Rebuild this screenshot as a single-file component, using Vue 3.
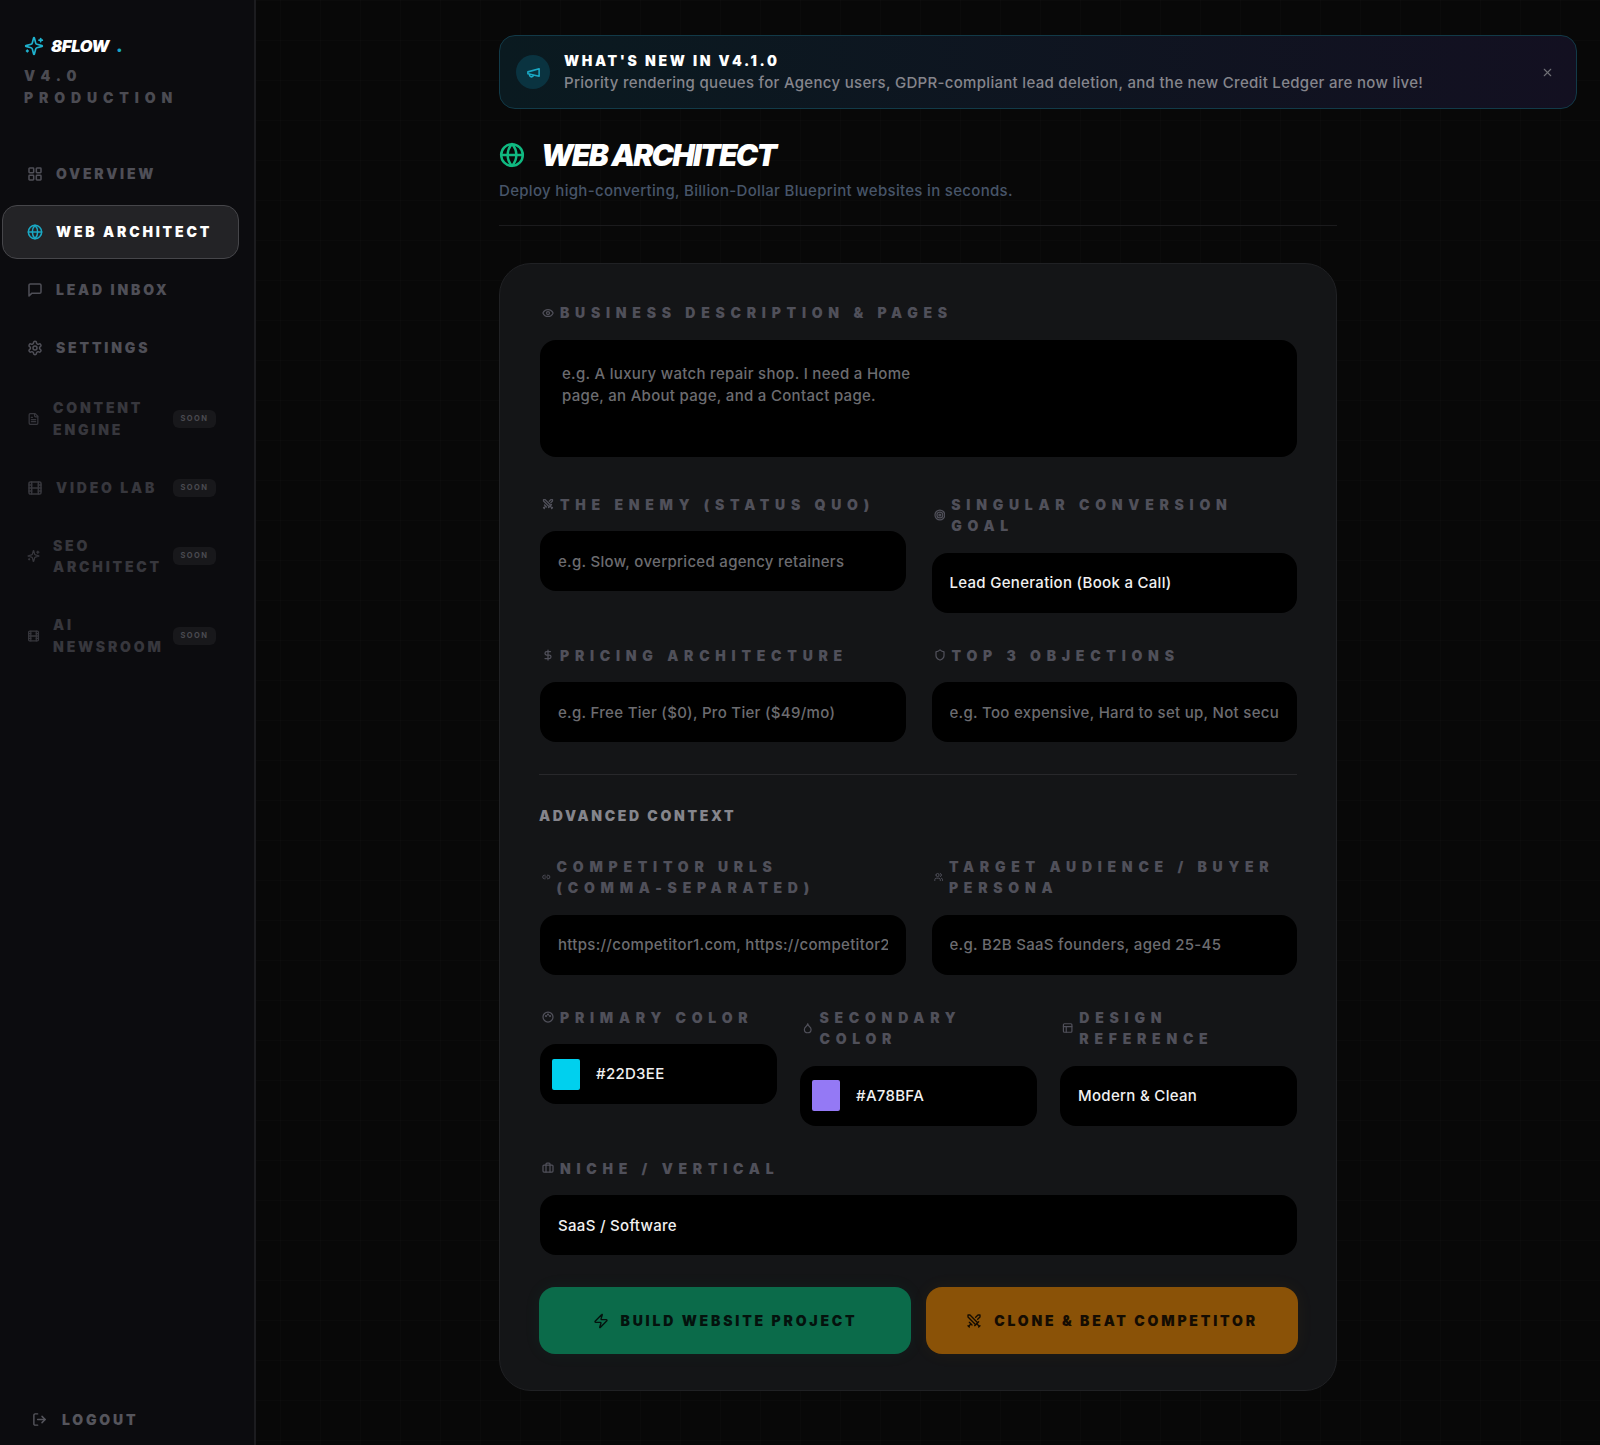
<script setup>
const c = (x, y, r) => `M${x - r} ${y}a${r} ${r} 0 1 0 ${2 * r} 0a${r} ${r} 0 1 0 ${-2 * r} 0`
const rect = (x, y, w, h, r) =>
  `M${x + r} ${y}h${w - 2 * r}a${r} ${r} 0 0 1 ${r} ${r}v${h - 2 * r}a${r} ${r} 0 0 1 ${-r} ${r}h${-(w - 2 * r)}a${r} ${r} 0 0 1 ${-r} ${-r}v${-(h - 2 * r)}a${r} ${r} 0 0 1 ${r} ${-r}z`

const icons = {
  grid: [rect(3, 3, 7, 7, 1), rect(14, 3, 7, 7, 1), rect(14, 14, 7, 7, 1), rect(3, 14, 7, 7, 1)],
  globe: [c(12, 12, 10), 'M12 2a14.5 14.5 0 0 0 0 20 14.5 14.5 0 0 0 0-20', 'M2 12h20'],
  message: ['M21 15a2 2 0 0 1-2 2H7l-4 4V5a2 2 0 0 1 2-2h14a2 2 0 0 1 2 2z'],
  settings: [
    'M12.22 2h-.44a2 2 0 0 0-2 2v.18a2 2 0 0 1-1 1.73l-.43.25a2 2 0 0 1-2 0l-.15-.08a2 2 0 0 0-2.73.73l-.22.38a2 2 0 0 0 .73 2.73l.15.1a2 2 0 0 1 1 1.72v.51a2 2 0 0 1-1 1.74l-.15.09a2 2 0 0 0-.73 2.73l.22.38a2 2 0 0 0 2.73.73l.15-.08a2 2 0 0 1 2 0l.43.25a2 2 0 0 1 1 1.73V20a2 2 0 0 0 2 2h.44a2 2 0 0 0 2-2v-.18a2 2 0 0 1 1-1.73l.43-.25a2 2 0 0 1 2 0l.15.08a2 2 0 0 0 2.73-.73l.22-.39a2 2 0 0 0-.73-2.73l-.15-.08a2 2 0 0 1-1-1.74v-.5a2 2 0 0 1 1-1.74l.15-.09a2 2 0 0 0 .73-2.73l-.22-.38a2 2 0 0 0-2.73-.73l-.15.08a2 2 0 0 1-2 0l-.43-.25a2 2 0 0 1-1-1.73V4a2 2 0 0 0-2-2z',
    c(12, 12, 3)
  ],
  file: ['M15 2H6a2 2 0 0 0-2 2v16a2 2 0 0 0 2 2h12a2 2 0 0 0 2-2V7Z', 'M14 2v4a2 2 0 0 0 2 2h4', 'M10 9H8', 'M16 13H8', 'M16 17H8'],
  film: [rect(3, 3, 18, 18, 2), 'M7 3v18', 'M3 7.5h4', 'M3 12h18', 'M3 16.5h4', 'M17 3v18', 'M17 7.5h4', 'M17 16.5h4'],
  sparkles: [
    'M9.937 15.5A2 2 0 0 0 8.5 14.063l-6.135-1.582a.5.5 0 0 1 0-.962L8.5 9.936A2 2 0 0 0 9.937 8.5l1.582-6.135a.5.5 0 0 1 .963 0L14.063 8.5A2 2 0 0 0 15.5 9.937l6.135 1.581a.5.5 0 0 1 0 .964L15.5 14.063a2 2 0 0 0-1.437 1.437l-1.582 6.135a.5.5 0 0 1-.963 0z',
    'M20 3v4', 'M22 5h-4', 'M4 17v2', 'M5 18H3'
  ],
  logout: ['M9 21H5a2 2 0 0 1-2-2V5a2 2 0 0 1 2-2h4', 'm16 17 5-5-5-5', 'M21 12H9'],
  megaphone: ['m3 11 18-5v12L3 14v-3z', 'M11.6 16.8a3 3 0 1 1-5.8-1.6'],
  x: ['M18 6 6 18', 'm6 6 12 12'],
  zap: ['M4 14a1 1 0 0 1-.78-1.63l9.9-10.2a.5.5 0 0 1 .86.46l-1.92 6.02A1 1 0 0 0 13 10h7a1 1 0 0 1 .78 1.63l-9.9 10.2a.5.5 0 0 1-.86-.46l1.92-6.02A1 1 0 0 0 11 14z'],
  swords: ['M14.5 17.5 3 6V3h3l11.5 11.5', 'm13 19 6-6', 'm16 16 4 4', 'm19 21 2-2', 'M14.5 6.5 18 3h3v3l-3.5 3.5', 'm5 14 4 4', 'm7 17-3 3', 'm3 19 2 2'],
  eye: ['M2.062 12.348a1 1 0 0 1 0-.696 10.75 10.75 0 0 1 19.876 0 1 1 0 0 1 0 .696 10.75 10.75 0 0 1-19.876 0', c(12, 12, 3)],
  target: [c(12, 12, 10), c(12, 12, 6), c(12, 12, 2)],
  dollar: ['M12 2v20', 'M17 5H9.5a3.5 3.5 0 0 0 0 7h5a3.5 3.5 0 0 1 0 7H6'],
  shield: ['M20 13c0 5-3.5 7.5-7.66 8.95a1 1 0 0 1-.67-.01C7.5 20.5 4 18 4 13V6a1 1 0 0 1 1-1c2 0 4.5-1.2 6.24-2.72a1.17 1.17 0 0 1 1.52 0C14.51 3.81 17 5 19 5a1 1 0 0 1 1 1z'],
  link: ['M9 17H7A5 5 0 0 1 7 7h2', 'M15 7h2a5 5 0 1 1 0 10h-2', 'M8 12h8'],
  users: ['M16 21v-2a4 4 0 0 0-4-4H6a4 4 0 0 0-4 4v2', 'M22 21v-2a4 4 0 0 0-3-3.87', 'M16 3.13a4 4 0 0 1 0 7.75', c(9, 7, 4)],
  palette: [c(12, 12, 10), c(8, 10, 1), c(12, 7, 1), c(16, 10, 1)],
  droplet: ['M12 22a7 7 0 0 0 7-7c0-2-1-3.9-3-5.5s-3.5-4-4-6.5c-.5 2.5-2 4.9-4 6.5C6 11.1 5 13 5 15a7 7 0 0 0 7 7z'],
  layout: [rect(3, 3, 18, 18, 2), 'M3 9h18', 'M9 21V9'],
  briefcase: ['M16 20V4a2 2 0 0 0-2-2h-4a2 2 0 0 0-2 2v16', rect(2, 6, 20, 14, 2)]
}

const mainNav = [
  { label: 'Overview', icon: 'grid' },
  { label: 'Web Architect', icon: 'globe', active: true },
  { label: 'Lead Inbox', icon: 'message' },
  { label: 'Settings', icon: 'settings' }
]
const soonNav = [
  { label: 'Content Engine', icon: 'file' },
  { label: 'Video Lab', icon: 'film' },
  { label: 'SEO Architect', icon: 'sparkles' },
  { label: 'AI Newsroom', icon: 'film' }
]
</script>

<template>
  <div class="app">
    <aside class="sidebar">
      <div class="brand">
        <div class="logo">
          <svg class="logo-icon" viewBox="0 0 24 24"><path v-for="d in icons.sparkles" :key="d" :d="d" /></svg>
          <span class="logo-text">8FLOW</span>
          <span class="logo-dot">.</span>
        </div>
        <p class="version">V4.0 PRODUCTION</p>
      </div>

      <nav class="nav">
        <a v-for="item in mainNav" :key="item.label" class="nav-item" :class="{ active: item.active }">
          <svg viewBox="0 0 24 24"><path v-for="d in icons[item.icon]" :key="d" :d="d" /></svg>
          <span>{{ item.label }}</span>
        </a>
        <a v-for="item in soonNav" :key="item.label" class="nav-item soon">
          <svg viewBox="0 0 24 24"><path v-for="d in icons[item.icon]" :key="d" :d="d" /></svg>
          <span class="soon-label">{{ item.label }}</span>
          <em class="badge">Soon</em>
        </a>
      </nav>

      <a class="logout">
        <svg viewBox="0 0 24 24"><path v-for="d in icons.logout" :key="d" :d="d" /></svg>
        <span>Logout</span>
      </a>
    </aside>

    <main class="main">
      <section class="banner">
        <div class="banner-icon">
          <svg viewBox="0 0 24 24"><path v-for="d in icons.megaphone" :key="d" :d="d" /></svg>
        </div>
        <div class="banner-text">
          <h2>What's new in v4.1.0</h2>
          <p>Priority rendering queues for Agency users, GDPR-compliant lead deletion, and the new Credit Ledger are now live!</p>
        </div>
        <svg class="banner-close" viewBox="0 0 24 24"><path v-for="d in icons.x" :key="d" :d="d" /></svg>
      </section>

      <div class="column">
        <header class="page-head">
          <div class="title-row">
            <svg viewBox="0 0 24 24"><path v-for="d in icons.globe" :key="d" :d="d" /></svg>
            <h1>Web Architect</h1>
          </div>
          <p>Deploy high-converting, Billion-Dollar Blueprint websites in seconds.</p>
        </header>

        <form class="card">
          <div class="field wide-gap">
            <label>
              <svg viewBox="0 0 24 24"><path v-for="d in icons.eye" :key="d" :d="d" /></svg>
              <span>Business Description &amp; Pages</span>
            </label>
            <textarea class="control area" placeholder="e.g. A luxury watch repair shop. I need a Home page, an About page, and a Contact page."></textarea>
          </div>

          <div class="two">
            <div class="field">
              <label>
                <svg viewBox="0 0 24 24"><path v-for="d in icons.swords" :key="d" :d="d" /></svg>
                <span>The Enemy (Status Quo)</span>
              </label>
              <input class="control" placeholder="e.g. Slow, overpriced agency retainers" />
            </div>
            <div class="field">
              <label>
                <svg viewBox="0 0 24 24"><path v-for="d in icons.target" :key="d" :d="d" /></svg>
                <span>Singular Conversion Goal</span>
              </label>
              <input class="control" readonly value="Lead Generation (Book a Call)" />
            </div>
            <div class="field">
              <label>
                <svg viewBox="0 0 24 24"><path v-for="d in icons.dollar" :key="d" :d="d" /></svg>
                <span>Pricing Architecture</span>
              </label>
              <input class="control" placeholder="e.g. Free Tier ($0), Pro Tier ($49/mo)" />
            </div>
            <div class="field">
              <label>
                <svg viewBox="0 0 24 24"><path v-for="d in icons.shield" :key="d" :d="d" /></svg>
                <span>Top 3 Objections</span>
              </label>
              <input class="control" placeholder="e.g. Too expensive, Hard to set up, Not secure" />
            </div>
          </div>

          <hr class="rule" />
          <h3 class="section-title">Advanced Context</h3>

          <div class="two">
            <div class="field">
              <label>
                <svg viewBox="0 0 24 24"><path v-for="d in icons.link" :key="d" :d="d" /></svg>
                <span>Competitor URLs <span class="nowrap">(comma-separated)</span></span>
              </label>
              <input class="control" placeholder="https://competitor1.com, https://competitor2.com" />
            </div>
            <div class="field">
              <label>
                <svg viewBox="0 0 24 24"><path v-for="d in icons.users" :key="d" :d="d" /></svg>
                <span>Target Audience / Buyer Persona</span>
              </label>
              <input class="control" placeholder="e.g. B2B SaaS founders, aged 25-45" />
            </div>
          </div>

          <div class="three">
            <div class="field">
              <label>
                <svg viewBox="0 0 24 24"><path v-for="d in icons.palette" :key="d" :d="d" /></svg>
                <span>Primary Color</span>
              </label>
              <div class="control color">
                <i class="swatch cyan"></i>
                <span>#22D3EE</span>
              </div>
            </div>
            <div class="field">
              <label>
                <svg viewBox="0 0 24 24"><path v-for="d in icons.droplet" :key="d" :d="d" /></svg>
                <span>Secondary Color</span>
              </label>
              <div class="control color">
                <i class="swatch violet"></i>
                <span>#A78BFA</span>
              </div>
            </div>
            <div class="field">
              <label>
                <svg viewBox="0 0 24 24"><path v-for="d in icons.layout" :key="d" :d="d" /></svg>
                <span>Design Reference</span>
              </label>
              <input class="control" readonly value="Modern &amp; Clean" />
            </div>
          </div>

          <div class="field full">
            <label>
              <svg viewBox="0 0 24 24"><path v-for="d in icons.briefcase" :key="d" :d="d" /></svg>
              <span>Niche / Vertical</span>
            </label>
            <input class="control" readonly value="SaaS / Software" />
          </div>

          <div class="actions">
            <button type="button" class="btn green">
              <svg viewBox="0 0 24 24"><path v-for="d in icons.zap" :key="d" :d="d" /></svg>
              <span>Build Website Project</span>
            </button>
            <button type="button" class="btn orange">
              <svg viewBox="0 0 24 24"><path v-for="d in icons.swords" :key="d" :d="d" /></svg>
              <span>Clone &amp; Beat Competitor</span>
            </button>
          </div>
        </form>
      </div>
    </main>
  </div>
</template>

<style>
html, body { margin: 0; background: #080808; }
</style>

<style scoped>
* { box-sizing: border-box; }
svg { fill: none; stroke: currentColor; stroke-width: 2; stroke-linecap: round; stroke-linejoin: round; }

.app {
  display: flex;
  min-height: 1445px;
  font-family: Inter, "Liberation Sans", sans-serif;
  background-color: #080808;
  background-image:
    linear-gradient(rgba(255, 255, 255, 0.012) 1px, transparent 1px),
    linear-gradient(90deg, rgba(255, 255, 255, 0.012) 1px, transparent 1px);
  background-size: 40px 40px;
}

/* Sidebar */
.sidebar {
  width: 256px;
  flex: none;
  display: flex;
  flex-direction: column;
  padding: 36px 0 0 2px;
  background: #0c0c0f;
  border-right: 2px solid #1c1c1f;
}
.brand { padding-left: 22px; }
.logo { display: flex; align-items: center; height: 20px; }
.logo-icon { width: 20px; height: 20px; color: #1fb3cf; margin-right: 7px; }
.logo-text { font-size: 16.5px; font-weight: 900; font-style: italic; color: #fff; letter-spacing: -0.02em; }
.logo-dot { font-size: 18px; font-weight: 900; color: #17a7c4; margin-left: 7px; line-height: 20px; }
.version {
  margin: 9px 0 0;
  width: 170px;
  font-size: 14px;
  line-height: 21.5px;
  font-weight: 900;
  letter-spacing: 0.42em;
  color: #4b4b52;
}

.nav { display: flex; flex-direction: column; gap: 4px; margin-top: 39px; width: 237px; }
.nav-item {
  display: flex;
  align-items: center;
  gap: 13px;
  min-height: 54px;
  padding: 15.25px 22px 15.25px 24px;
  border: 1px solid transparent;
  border-radius: 15px;
  font-size: 14px;
  line-height: 21.5px;
  font-weight: 900;
  letter-spacing: 0.2em;
  text-transform: uppercase;
  color: #4f4f57;
}
.nav-item svg { width: 16px; height: 16px; stroke-width: 2.3; }
.nav-item.active {
  background: #232326;
  border-color: #46464a;
  color: #fff;
}
.nav-item.active svg { color: #1aa8c4; }
.nav-item.soon { color: #37373d; }
.nav-item.soon:nth-child(5) { margin-top: 2px; }
.nav-item.soon svg { min-width: 13px; }
.soon-label { flex: 0 1 auto; margin-right: auto; }
.badge {
  flex: none;
  width: 43px;
  height: 18px;
  line-height: 18px;
  text-align: center;
  border-radius: 6px;
  margin-left: -5px;
  background: #18181b;
  font-size: 7.5px;
  font-style: normal;
  font-weight: 700;
  letter-spacing: 0.2em;
  color: #4a4a50;
}
.logout {
  margin-top: auto;
  margin-bottom: 15px;
  padding-left: 30px;
  display: flex;
  align-items: center;
  gap: 15px;
  height: 22px;
  font-size: 14px;
  font-weight: 900;
  letter-spacing: 0.2em;
  text-transform: uppercase;
  color: #55555c;
}
.logout svg { width: 15px; height: 15px; stroke-width: 2.3; }

/* Main */
.main { flex: 1; min-width: 0; padding: 35px 23px 0 243px; }

.banner {
  display: flex;
  align-items: center;
  height: 74px;
  padding: 0 22px 0 16px;
  border: 1px solid #123a48;
  border-radius: 16px;
  background: linear-gradient(90deg, #0a1a20 0%, #131021 100%);
}
.banner-icon {
  width: 34px;
  height: 34px;
  flex: none;
  display: flex;
  align-items: center;
  justify-content: center;
  border-radius: 50%;
  background: #0a3340;
  color: #1aa8c4;
}
.banner-icon svg { width: 15px; height: 15px; stroke-width: 2.5; }
.banner-text { flex: 1; min-width: 0; margin-left: 14px; }
.banner-text h2 {
  margin: 0;
  font-size: 14px;
  line-height: 20px;
  font-weight: 900;
  letter-spacing: 0.19em;
  text-transform: uppercase;
  color: #fff;
}
.banner-text p { margin: 2px 0 0; font-size: 15px; line-height: 20px; letter-spacing: 0.02em; font-weight: 500; color: #85858c; }
.banner-close { width: 13px; height: 13px; color: #6f6f76; flex: none; }

.column { width: 838px; }
.page-head { margin-top: 29px; padding-bottom: 24px; border-bottom: 1px solid #1b1b1d; }
.title-row { display: flex; align-items: center; gap: 16px; height: 34px; }
.title-row svg { width: 26px; height: 26px; color: #10b981; flex: none; stroke-width: 2.3; }
.title-row h1 {
  margin: 0;
  font-size: 30px;
  line-height: 34px;
  font-weight: 900;
  font-style: italic;
  letter-spacing: -0.058em;
  text-transform: uppercase;
  color: #fff;
}
.page-head p { margin: 9px 0 0; font-size: 15px; line-height: 20px; letter-spacing: 0.021em; font-weight: 500; color: #475569; }

.card {
  margin-top: 37px;
  padding: 38px 39px 36px 40px;
  height: 1128px;
  background: #141517;
  border: 1px solid #202124;
  border-radius: 32px;
}
.field { display: flex; flex-direction: column; min-width: 0; }
.wide-gap { margin-bottom: 37px; }
.field label {
  display: flex;
  align-items: center;
  gap: 6px;
  padding-left: 2px;
  margin-bottom: 16px;
  font-size: 14px;
  line-height: 21.5px;
  font-weight: 900;
  letter-spacing: 0.41em;
  text-transform: uppercase;
  color: #50505a;
}
.field label svg { width: 12px; height: 12px; stroke-width: 2.5; }
.nowrap { white-space: nowrap; }
.control {
  width: 100%;
  height: 60px;
  padding: 0 18px;
  border: 0;
  outline: 0;
  border-radius: 16px;
  background: #000;
  color: #f1f1f1;
  font: 500 15px/20px Inter, "Liberation Sans", sans-serif;
  letter-spacing: 0.02em;
}
.control::placeholder { color: #6c6c70; opacity: 1; }
.area {
  display: block;
  height: 117px;
  padding: 23px 370px 20px 22px;
  line-height: 22px;
  resize: none;
}
.two { display: grid; grid-template-columns: 1fr 1fr; gap: 32px 26px; }
.rule { margin: 32px 0 0 -1px; border: 0; border-top: 1px solid #28282b; }
.section-title {
  margin: 30px 0 29px -1px;
  font-size: 14px;
  line-height: 21.5px;
  font-weight: 900;
  letter-spacing: 0.19em;
  text-transform: uppercase;
  color: #85858c;
}
.three { margin-top: 32px; display: grid; grid-template-columns: repeat(3, 1fr); gap: 23px; }
.color { display: flex; align-items: center; gap: 16px; padding: 0 12px; }
.swatch { width: 28px; height: 31px; border-radius: 2px; flex: none; }
.cyan { background: #00d0ee; }
.violet { background: #9479f5; }
.full { margin-top: 32px; }
.actions { margin: 32px -1px 0 -1px; display: grid; grid-template-columns: 1fr 1fr; gap: 15px; }
.btn {
  display: flex;
  align-items: center;
  justify-content: center;
  gap: 12px;
  height: 67px;
  border: 0;
  border-radius: 16px;
  font: 900 14px/20px Inter, "Liberation Sans", sans-serif;
  letter-spacing: 0.2em;
  text-transform: uppercase;
  color: #04120d;
}
.btn svg { width: 16px; height: 16px; }
.green { background: #0b6b4a; box-shadow: 0 0 18px rgba(16, 185, 129, 0.06); }
.orange { background: #8a5207; color: #140c02; box-shadow: 0 0 18px rgba(245, 158, 11, 0.06); }
</style>
